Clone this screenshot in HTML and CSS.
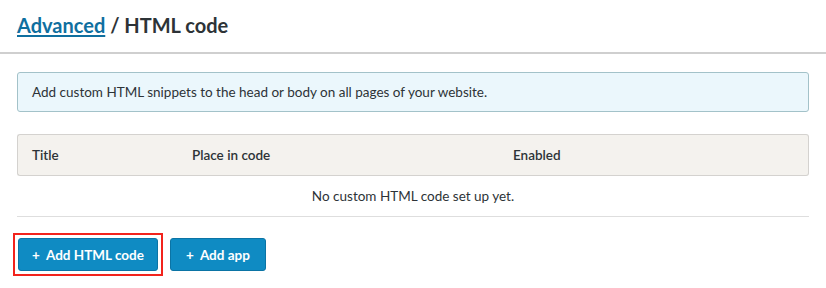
FILE: index.html
```html
<!DOCTYPE html>
<html lang="en">
<head>
<meta charset="UTF-8" />
<title>Advanced / HTML code</title>
<link rel="stylesheet" href="styles.css">
</head>
<body>

<header class="page-header">
  <h1><a href="#">Advanced</a> / HTML code</h1>
</header>

<main class="content">
  <div class="info-box">Add custom HTML snippets to the head or body on all pages of your website.</div>

  <table class="code-table">
    <thead>
      <tr>
        <th class="col-title">Title</th>
        <th class="col-place">Place in code</th>
        <th class="col-enabled">Enabled</th>
      </tr>
    </thead>
    <tbody>
      <tr>
        <td colspan="3" class="empty">No custom HTML code set up yet.</td>
      </tr>
    </tbody>
  </table>

  <div class="actions">
    <div class="highlight"><button type="button" class="btn">+&nbsp;&nbsp;Add HTML code</button></div>
    <button type="button" class="btn btn-app">+&nbsp;&nbsp;Add app</button>
  </div>
</main>

</body>
</html>
```

FILE: styles.css
```css
body {
  margin: 0;
  font-family: Lato, "Open Sans", sans-serif;
  color: #2d3337;
  background: #fff;
}
.page-header {
  height: 54px;
  border-bottom: 2px solid #cfcfcf;
  box-sizing: border-box;
  padding: 0 17px;
  display: flex;
  align-items: center;
}
.page-header h1 {
  margin: 0;
  font-size: 20px;
  font-weight: 700;
  margin-top: -2px;
}
.page-header a {
  color: #0f6f9f;
  text-decoration: underline;
  text-underline-offset: 2px;
  text-decoration-thickness: 2px;
}
.content {
  padding: 18px 17px 0;
  width: 792px;
}
.info-box {
  background: #ebf7fc;
  border: 1px solid #a3c2c9;
  border-radius: 3px;
  height: 40px;
  box-sizing: border-box;
  padding: 0 14px;
  display: flex;
  align-items: center;
  font-size: 13.5px;
}
.code-table {
  width: 100%;
  margin-top: 22px;
  border-collapse: separate;
  border-spacing: 0;
  font-size: 13.5px;
}
.code-table th {
  background: #f4f2ee;
  border-top: 1px solid #d4d2cf;
  border-bottom: 1px solid #d4d2cf;
  height: 40px;
  text-align: left;
  font-weight: 600;
  padding: 0;
}
.col-title {
  width: 160px;
  padding-left: 14px !important;
  border-left: 1px solid #d4d2cf;
  border-radius: 3px 0 0 3px;
}
.col-place {
  width: 321px;
}
.col-enabled {
  border-right: 1px solid #d4d2cf;
  border-radius: 0 3px 3px 0;
}
.empty {
  text-align: center;
  height: 40px;
  border-bottom: 1px solid #dedede;
  padding: 0;
}
.actions {
  display: flex;
  align-items: center;
  margin: 16px 0 0 -4px;
  gap: 7px;
}
.highlight {
  display: flex;
  border: 2px solid #f2231c;
  padding: 3px;
}
.btn {
  background: #0f8bc3;
  color: #fff;
  border: 1px solid #0b74a5;
  border-radius: 3px;
  height: 33px;
  padding: 0 13px;
  font-family: inherit;
  font-size: 13.5px;
  font-weight: 700;
  cursor: pointer;
}
.btn-app {
  padding: 0 15px;
}
.btn:hover {
  background: #0c7db0;
}
```
